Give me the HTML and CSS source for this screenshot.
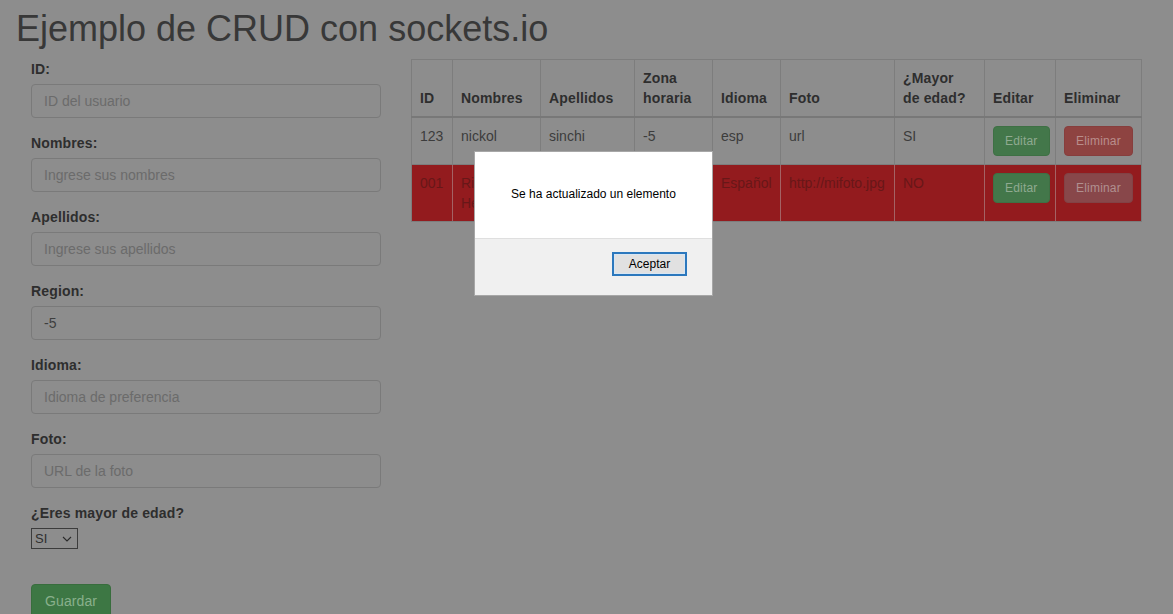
FILE: index.html
```html
<!DOCTYPE html>
<html lang="es">
<head>
<meta charset="utf-8">
<title>Ejemplo de CRUD con sockets.io</title>
<link rel="stylesheet" href="styles.css">
</head>
<body>
<div class="page">
  <h1 class="title">Ejemplo de CRUD con sockets.io</h1>
  <div class="layout">
    <form class="form">
      <div class="group">
        <label class="label">ID:</label>
        <div class="input placeholder">ID del usuario</div>
      </div>
      <div class="group">
        <label class="label">Nombres:</label>
        <div class="input placeholder">Ingrese sus nombres</div>
      </div>
      <div class="group">
        <label class="label">Apellidos:</label>
        <div class="input placeholder">Ingrese sus apellidos</div>
      </div>
      <div class="group">
        <label class="label">Region:</label>
        <div class="input value">-5</div>
      </div>
      <div class="group">
        <label class="label">Idioma:</label>
        <div class="input placeholder">Idioma de preferencia</div>
      </div>
      <div class="group">
        <label class="label">Foto:</label>
        <div class="input placeholder">URL de la foto</div>
      </div>
      <div class="group group-select">
        <label class="label">¿Eres mayor de edad?</label>
        <div class="select">
          <span>SI</span>
          <svg width="10" height="6" viewBox="0 0 10 6"><path d="M1 1 L5 5 L9 1" fill="none" stroke="#2a2a2a" stroke-width="1.1"/></svg>
        </div>
      </div>
      <div class="btn btn-save">Guardar</div>
    </form>

    <div class="table-wrap">
      <table class="table">
        <colgroup>
          <col style="width:41px"><col style="width:88px"><col style="width:94px"><col style="width:78px"><col style="width:68px"><col style="width:114px"><col style="width:90px"><col style="width:71px"><col style="width:86px">
        </colgroup>
        <thead>
          <tr>
            <th>ID</th><th>Nombres</th><th>Apellidos</th><th>Zona<br>horaria</th><th>Idioma</th><th>Foto</th><th>¿Mayor<br>de edad?</th><th>Editar</th><th>Eliminar</th>
          </tr>
        </thead>
        <tbody>
          <tr>
            <td>123</td><td>nickol</td><td>sinchi</td><td>-5</td><td>esp</td><td>url</td><td>SI</td>
            <td><span class="btn btn-sm btn-edit">Editar</span></td>
            <td><span class="btn btn-sm btn-del">Eliminar</span></td>
          </tr>
          <tr class="danger">
            <td>001</td><td>Ricardo Herrera</td><td>Perez Lopez</td><td>-5</td><td>Español</td><td class="nowrap">http://mifoto.jpg</td><td>NO</td>
            <td><span class="btn btn-sm btn-edit">Editar</span></td>
            <td><span class="btn btn-sm btn-del2">Eliminar</span></td>
          </tr>
        </tbody>
      </table>
    </div>
  </div>

  <div class="dialog">
    <div class="dialog-body">Se ha actualizado un elemento</div>
    <div class="dialog-foot">
      <span class="dialog-btn">Aceptar</span>
    </div>
  </div>
</div>
</body>
</html>
```

FILE: styles.css
```css
html, body {
  margin: 0;
  padding: 0;
  background: #8d8d8d;
  height: 100%;
  overflow: hidden;
}
body {
  font-family: "Liberation Sans", Arial, sans-serif;
  font-size: 14px;
  line-height: 20px;
  color: #3a3a3a;
}
.page {
  position: relative;
  padding: 9px 16px 0;
}
.title {
  margin: 0 0 10px;
  font-size: 36px;
  line-height: 40px;
  font-weight: 400;
  color: #383838;
}
.layout {
  display: flex;
  align-items: flex-start;
  gap: 30px;
  padding-left: 15px;
}
.form {
  width: 350px;
  flex: none;
  margin: 0;
}
.group {
  margin-bottom: 15px;
}
.label {
  display: block;
  font-weight: 700;
  color: #2e2e2e;
  margin-bottom: 5px;
  letter-spacing: 0.15px;
}
.input {
  box-sizing: border-box;
  height: 34px;
  padding: 6px 12px;
  border: 1px solid #7a7a7a;
  border-radius: 4px;
  background: #8d8d8d;
}
.placeholder { color: #6b6b6b; }
.value { color: #3e3e3e; }
.group-select { margin-bottom: 35px; }
.select {
  box-sizing: border-box;
  width: 47px;
  height: 21px;
  border: 1px solid #3c3c3c;
  display: flex;
  align-items: center;
  justify-content: space-between;
  padding: 0 5px 0 3px;
  font-size: 13px;
  color: #2f2f2f;
}
.select svg { display: block; }
.btn {
  display: inline-block;
  box-sizing: border-box;
  text-align: center;
  border-radius: 4px;
  white-space: nowrap;
}
.btn-save {
  background: #3d7744;
  border: 1px solid #386d3d;
  color: #89b08c;
  padding: 6px 13px;
  height: 34px;
  font-size: 14px;
  letter-spacing: 0.1px;
}
.table-wrap {
  width: 730px;
  flex: none;
}
.table {
  width: 730px;
  table-layout: fixed;
  border-collapse: collapse;
  border: 1px solid #7d7d7d;
}
.table th, .table td {
  border: 1px solid #7d7d7d;
  padding: 8px;
  text-align: left;
}
.table th {
  vertical-align: bottom;
  font-weight: 700;
  color: #2e2e2e;
  border-bottom: 2px solid #787878;
  letter-spacing: 0.15px;
}
.table td {
  vertical-align: top;
  color: #3c3c3c;
}
.table tr.danger td {
  background: #931b1e;
  color: #681718;
  border-color: #a46264;
  border-bottom-color: #7d7d7d;
}
.table tr.danger td:first-child { border-left-color: #7d7d7d; }
.table tr.danger td:last-child { border-right-color: #7d7d7d; }
.nowrap { white-space: nowrap; }
.btn-sm {
  height: 30px;
  padding: 5px 11px;
  font-size: 12px;
  line-height: 18px;
  letter-spacing: 0.2px;
}
.btn-edit {
  background: #43774a;
  border: 1px solid #3e7044;
  color: #90aa91;
}
.btn-del {
  background: #8e4341;
  border: 1px solid #873e3d;
  color: #b98e8c;
}
.btn-del2 {
  background: #88474a;
  border: 1px solid #824245;
  color: #b09090;
}
.dialog {
  position: absolute;
  left: 474px;
  top: 151px;
  width: 239px;
  box-sizing: border-box;
  border: 1px solid #a7a7a7;
  background: #ffffff;
  font-size: 12px;
  line-height: 15px;
  color: #000;
}
.dialog-body {
  height: 86px;
  box-sizing: border-box;
  padding-top: 35px;
  text-align: center;
}
.dialog-foot {
  height: 57px;
  box-sizing: border-box;
  background: #f0f0f0;
  border-top: 1px solid #dfdfdf;
  display: flex;
  justify-content: flex-end;
  align-items: flex-start;
  padding: 13px 25px 0 0;
}
.dialog-btn {
  box-sizing: border-box;
  width: 75px;
  height: 24px;
  border: 2px solid #2c78bd;
  box-shadow: inset 0 0 0 1px #d8e6f3;
  background: #e1e1e1;
  text-align: center;
  line-height: 20px;
  color: #000;
}
```
